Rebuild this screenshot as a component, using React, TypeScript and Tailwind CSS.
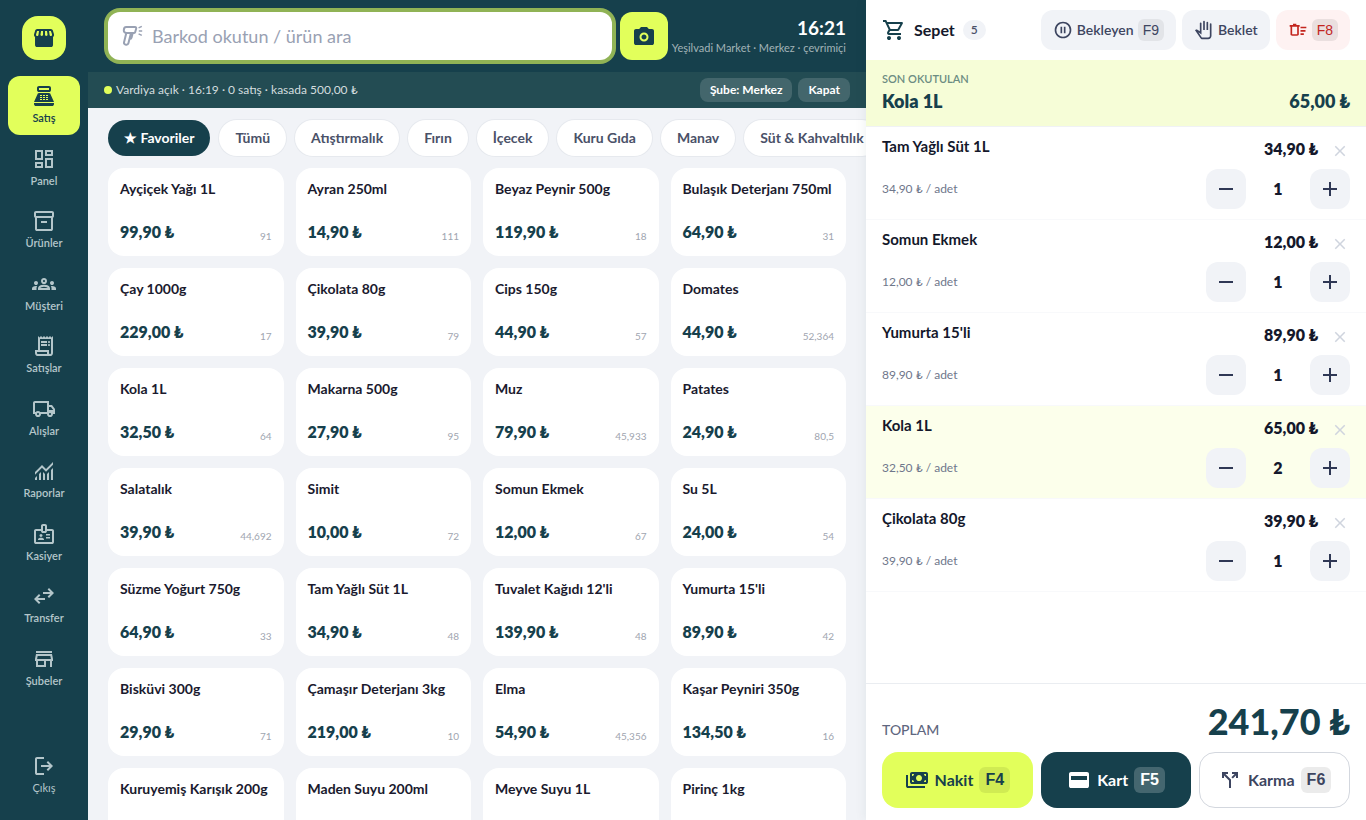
import { useState } from "react"

const icons = {
  storefront:
    "M841-518v318q0 33-23.5 56.5T761-120H201q-33 0-56.5-23.5T121-200v-318q-23-21-35.5-54t-.5-72l42-136q8-26 28.5-43t47.5-17h556q27 0 47 16.5t29 43.5l42 136q12 39-.5 71T841-518Zm-272-42q27 0 41-18.5t11-41.5l-22-140h-78v148q0 21 14 36.5t34 15.5Zm-180 0q23 0 37.5-15.5T441-612v-148h-78l-22 140q-4 24 10.5 42t37.5 18Zm-178 0q18 0 31.5-13t16.5-33l22-154h-78l-40 134q-6 20 6.5 43t41.5 23Zm540 0q29 0 42-23t6-43l-42-134h-76l22 154q3 20 16.5 33t31.5 13Z",
  register:
    "M280-640q-33 0-56.5-23.5T200-720v-80q0-33 23.5-56.5T280-880h400q33 0 56.5 23.5T760-800v80q0 33-23.5 56.5T680-640H280Zm0-80h400v-80H280v80ZM160-80q-33 0-56.5-23.5T80-160v-40h800v40q0 33-23.5 56.5T800-80H160ZM80-240l139-313q10-22 30-34.5t43-12.5h376q23 0 43 12.5t30 34.5l139 313H80Zm240-80h80v-40h-80v40Zm0-80h80v-40h-80v40Zm0-80h80v-40h-80v40Zm120 160h80v-40h-80v40Zm0-80h80v-40h-80v40Zm0-80h80v-40h-80v40Zm120 160h80v-40h-80v40Zm0-80h80v-40h-80v40Zm0-80h80v-40h-80v40Z",
  dashboard:
    "M520-600v-240h320v240H520ZM120-440v-400h320v400H120Zm400 320v-400h320v400H520Zm-400 0v-240h320v240H120Zm80-400h160v-240H200v240Zm400 320h160v-240H600v240Zm0-480h160v-80H600v80ZM200-200h160v-80H200v80Z",
  box: "M200-80q-33 0-56.5-23.5T120-160v-451q-18-11-29-28.5T80-680v-120q0-33 23.5-56.5T160-880h640q33 0 56.5 23.5T880-800v120q0 23-11 40.5T840-611v451q0 33-23.5 56.5T760-80H200Zm0-520v440h560v-440H200Zm-40-80h640v-120H160v120Zm200 280h240v-80H360v80Z",
  groups:
    "M0-240v-63q0-43 44-70t116-27q13 0 25 .5t23 2.5q-14 21-21 44t-7 48v65H0Zm240 0v-65q0-32 17.5-58.5T307-410q32-20 76.5-30t96.5-10q53 0 97.5 10t76.5 30q32 20 49 46.5t17 58.5v65H240Zm540 0v-65q0-26-6.5-49T754-397q11-2 22.5-2.5t23.5-.5q72 0 116 26.5t44 70.5v63H780Zm-455-80h311q-10-20-55.5-35T480-370q-55 0-100.5 15T325-320ZM160-440q-33 0-56.5-23.5T80-520q0-34 23.5-57t56.5-23q34 0 57 23t23 57q0 33-23 56.5T160-440Zm640 0q-33 0-56.5-23.5T720-520q0-34 23.5-57t56.5-23q34 0 57 23t23 57q0 33-23 56.5T800-440Zm-320-40q-50 0-85-35t-35-85q0-51 35-85.5t85-34.5q51 0 85.5 34.5T600-600q0 50-34.5 85T480-480Zm0-80q17 0 28.5-11.5T520-600q0-17-11.5-28.5T480-640q-17 0-28.5 11.5T440-600q0 17 11.5 28.5T480-560Z",
  receipt:
    "M240-80q-50 0-85-35t-35-85v-120h120v-560l60 60 60-60 60 60 60-60 60 60 60-60 60 60 60-60 60 60 60-60v680q0 50-35 85t-85 35H240Zm480-80q17 0 28.5-11.5T760-200v-560H320v440h360v120q0 17 11.5 28.5T720-160ZM360-600v-80h240v80H360Zm0 120v-80h240v80H360Zm320-120q-17 0-28.5-11.5T640-640q0-17 11.5-28.5T680-680q17 0 28.5 11.5T720-640q0 17-11.5 28.5T680-600Zm0 120q-17 0-28.5-11.5T640-520q0-17 11.5-28.5T680-560q17 0 28.5 11.5T720-520q0 17-11.5 28.5T680-480ZM240-160h360v-80H200v40q0 17 11.5 28.5T240-160Z",
  truck:
    "M240-160q-50 0-85-35t-35-85H40v-440q0-33 23.5-56.5T120-800h560v160h120l120 160v200h-80q0 50-35 85t-85 35q-50 0-85-35t-35-85H360q0 50-35 85t-85 35Zm0-80q17 0 28.5-11.5T280-280q0-17-11.5-28.5T240-320q-17 0-28.5 11.5T200-280q0 17 11.5 28.5T240-240ZM120-360h32q17-18 39-29t49-11q27 0 49 11t39 29h272v-360H120v360Zm600 120q17 0 28.5-11.5T760-280q0-17-11.5-28.5T720-320q-17 0-28.5 11.5T680-280q0 17 11.5 28.5T720-240Zm-40-200h170l-90-120h-80v120Z",
  chart:
    "M120-120v-80l80-80v160h-80Zm160 0v-240l80-80v320h-80Zm160 0v-320l80 81v239h-80Zm160 0v-239l80-80v319h-80Zm160 0v-400l80-80v480h-80ZM120-327v-113l280-280 160 160 280-280v113L560-447 400-607 120-327Z",
  badge:
    "M160-80q-33 0-56.5-23.5T80-160v-440q0-33 23.5-56.5T160-680h200v-120q0-33 23.5-56.5T440-880h80q33 0 56.5 23.5T600-800v120h200q33 0 56.5 23.5T880-600v440q0 33-23.5 56.5T800-80H160Zm0-80h640v-440H600q0 33-23.5 56.5T520-520h-80q-33 0-56.5-23.5T360-600H160v440Zm80-80h240v-18q0-17-9.5-31.5T444-312q-20-9-40.5-13.5T360-330q-23 0-43.5 4.5T276-312q-17 8-26.5 22.5T240-258v18Zm320-60h160v-60H560v60Zm-200-60q25 0 42.5-17.5T420-420q0-25-17.5-42.5T360-480q-25 0-42.5 17.5T300-420q0 25 17.5 42.5T360-360Zm200-60h160v-60H560v60ZM440-600h80v-200h-80v200Z",
  swap: "M280-160 80-360l200-200 56 57-103 103h287v80H233l103 103-56 57Zm400-240-56-57 103-103H440v-80h287L624-743l56-57 200 200-200 200Z",
  store:
    "M160-720v-80h640v80H160Zm0 560v-240h-40v-80l40-200h640l40 200v80h-40v240h-80v-240H560v240H160Zm80-80h240v-160H240v160Zm-38-240h556l-24-120H226l-24 120Z",
  logout:
    "M200-120q-33 0-56.5-23.5T120-200v-560q0-33 23.5-56.5T200-840h280v80H200v560h280v80H200Zm440-160-55-58 102-102H360v-80h327L585-622l55-58 200 200-200 200Z",
  camera:
    "M480-260q75 0 127.5-52.5T660-440q0-75-52.5-127.5T480-620q-75 0-127.5 52.5T300-440q0 75 52.5 127.5T480-260Zm0-80q-42 0-71-29t-29-71q0-42 29-71t71-29q42 0 71 29t29 71q0 42-29 71t-71 29ZM160-120q-33 0-56.5-23.5T80-200v-480q0-33 23.5-56.5T160-760h126l74-80h240l74 80h126q33 0 56.5 23.5T880-680v480q0 33-23.5 56.5T800-120H160Z",
  cart: "M280-80q-33 0-56.5-23.5T200-160q0-33 23.5-56.5T280-240q33 0 56.5 23.5T360-160q0 33-23.5 56.5T280-80Zm400 0q-33 0-56.5-23.5T600-160q0-33 23.5-56.5T680-240q33 0 56.5 23.5T760-160q0 33-23.5 56.5T680-80ZM246-720l96 200h280l110-200H246Zm-38-80h590q23 0 35 20.5t1 41.5L692-482q-11 20-29.5 31T622-440H324l-44 80h480v80H280q-45 0-68-39.5t-2-78.5l54-98-144-304H40v-80h130l38 80Z",
  pause:
    "M360-320h80v-320h-80v320Zm160 0h80v-320h-80v320ZM480-80q-83 0-156-31.5T197-197q-54-54-85.5-127T80-480q0-83 31.5-156T197-763q54-54 127-85.5T480-880q83 0 156 31.5T763-763q54 54 85.5 127T880-480q0 83-31.5 156T763-197q-54 54-127 85.5T480-80Zm0-80q134 0 227-93t93-227q0-134-93-227t-227-93q-134 0-227 93t-93 227q0 134 93 227t227 93Z",
  hand: "M402-40q-30 0-56-13.5T303-92L48-465l24-23q19-19 45-22t47 12l116 81v-383q0-17 11.5-28.5T320-840q17 0 28.5 11.5T360-800v537L212-367l157 229q5 8 14 13t19 5h278q33 0 56.5-23.5T760-200v-560q0-17 11.5-28.5T800-800q17 0 28.5 11.5T840-760v560q0 66-47 113T680-40H402Zm38-440v-400q0-17 11.5-28.5T480-920q17 0 28.5 11.5T520-880v400h-80Zm160 0v-360q0-17 11.5-28.5T640-880q17 0 28.5 11.5T680-840v360h-80Z",
  sweep:
    "M600-240v-80h160v80H600Zm0-320v-80h280v80H600Zm0 160v-80h240v80H600ZM120-640H80v-80h160v-60h160v60h160v80h-40v360q0 33-23.5 56.5T440-200H200q-33 0-56.5-23.5T120-280v-360Zm80 0v360h240v-360H200Z",
  cash: "M280-320q-33 0-56.5-23.5T200-400v-320q0-33 23.5-56.5T280-800h560q33 0 56.5 23.5T920-720v320q0 33-23.5 56.5T840-320H280ZM560-440q50 0 85-35t35-85q0-50-35-85t-85-35q-50 0-85 35t-35 85q0 50 35 85t85 35ZM280-400h80q0-33-23.5-56.5T280-480v80Zm560 0v-80q-33 0-56.5 23.5T760-400h80ZM280-640q33 0 56.5-23.5T360-720h-80v80Zm560 0v-80h-80q0 33 23.5 56.5T840-640ZM800-160H120q-33 0-56.5-23.5T40-240v-440h80v440h680v80Z",
  card: "M160-160q-33 0-56.5-23.5T80-240v-480q0-33 23.5-56.5T160-800h640q33 0 56.5 23.5T880-720v480q0 33-23.5 56.5T800-160H160Zm0-320h640v-160H160v160Z",
  split:
    "M440-160v-304L240-664v104h-80v-240h240v80H296l224 224v336h-80Zm154-376-58-58 128-126H560v-80h240v240h-80v-104L594-536Z",
  minus: "M200-440v-80h560v80H200Z",
  plus: "M440-440H200v-80h240v-240h80v240h240v80H520v240h-80v-240Z",
  close:
    "m256-200-56-56 224-224-224-224 56-56 224 224 224-224 56 56-224 224 224 224-56 56-224-224-224 224Z",
}

type IconName = keyof typeof icons

const Icon = ({ name, className }: { name: IconName; className: string }) => (
  <svg viewBox="0 -960 960 960" fill="currentColor" fillRule="evenodd" className={`shrink-0 ${className}`} aria-hidden="true">
    <path d={icons[name]} />
  </svg>
)

const ScannerIcon = () => (
  <svg
    viewBox="0 0 24 24"
    fill="none"
    stroke="currentColor"
    strokeWidth="2"
    strokeLinejoin="round"
    className="size-6 shrink-0"
    aria-hidden="true"
  >
    <path d="M6.3 3H15a1.2 1.2 0 0 1 1.2 1.5l-1 3.6a1.2 1.2 0 0 1-1.2.9H6.5A2.6 2.6 0 0 1 3.8 6.4C3.8 4.5 4.9 3 6.3 3Z" />
    <path d="M6.3 9 4 18.4a1.9 1.9 0 0 0 1.8 2.3h.8a1.9 1.9 0 0 0 1.8-1.4L11 9M9.5 15h.3a1.8 1.8 0 0 0 1.7-1.3L12.7 9" />
    <path d="m18.6 3.9 3.2-1.500M18.8 7h3.400M18.600 9.900l3.200 1.500" strokeWidth="1.5" />
  </svg>
)

const navItems: { label: string; icon: IconName }[] = [
  { label: "Satış", icon: "register" },
  { label: "Panel", icon: "dashboard" },
  { label: "Ürünler", icon: "box" },
  { label: "Müşteri", icon: "groups" },
  { label: "Satışlar", icon: "receipt" },
  { label: "Alışlar", icon: "truck" },
  { label: "Raporlar", icon: "chart" },
  { label: "Kasiyer", icon: "badge" },
  { label: "Transfer", icon: "swap" },
  { label: "Şubeler", icon: "store" },
]

const categories = ["★ Favoriler", "Tümü", "Atıştırmalık", "Fırın", "İçecek", "Kuru Gıda", "Manav", "Süt & Kahvaltılık"]

const products: { name: string; price?: number; stock?: string }[] = [
  { name: "Ayçiçek Yağı 1L", price: 99.9, stock: "91" },
  { name: "Ayran 250ml", price: 14.9, stock: "111" },
  { name: "Beyaz Peynir 500g", price: 119.9, stock: "18" },
  { name: "Bulaşık Deterjanı 750ml", price: 64.9, stock: "31" },
  { name: "Çay 1000g", price: 229, stock: "17" },
  { name: "Çikolata 80g", price: 39.9, stock: "79" },
  { name: "Cips 150g", price: 44.9, stock: "57" },
  { name: "Domates", price: 44.9, stock: "52,364" },
  { name: "Kola 1L", price: 32.5, stock: "64" },
  { name: "Makarna 500g", price: 27.9, stock: "95" },
  { name: "Muz", price: 79.9, stock: "45,933" },
  { name: "Patates", price: 24.9, stock: "80,5" },
  { name: "Salatalık", price: 39.9, stock: "44,692" },
  { name: "Simit", price: 10, stock: "72" },
  { name: "Somun Ekmek", price: 12, stock: "67" },
  { name: "Su 5L", price: 24, stock: "54" },
  { name: "Süzme Yoğurt 750g", price: 64.9, stock: "33" },
  { name: "Tam Yağlı Süt 1L", price: 34.9, stock: "48" },
  { name: "Tuvalet Kağıdı 12'li", price: 139.9, stock: "48" },
  { name: "Yumurta 15'li", price: 89.9, stock: "42" },
  { name: "Bisküvi 300g", price: 29.9, stock: "71" },
  { name: "Çamaşır Deterjanı 3kg", price: 219, stock: "10" },
  { name: "Elma", price: 54.9, stock: "45,356" },
  { name: "Kaşar Peyniri 350g", price: 134.5, stock: "16" },
  { name: "Kuruyemiş Karışık 200g" },
  { name: "Maden Suyu 200ml" },
  { name: "Meyve Suyu 1L" },
  { name: "Pirinç 1kg" },
]

const initialCart = [
  { name: "Tam Yağlı Süt 1L", price: 34.9, qty: 1 },
  { name: "Somun Ekmek", price: 12, qty: 1 },
  { name: "Yumurta 15'li", price: 89.9, qty: 1 },
  { name: "Kola 1L", price: 32.5, qty: 2 },
  { name: "Çikolata 80g", price: 39.9, qty: 1 },
]

const money = (value: number) => `${value.toFixed(2).replace(".", ",")} ₺`

const Sidebar = () => (
  <aside className="flex w-22 shrink-0 flex-col items-center bg-[#16404c] px-2 py-4 text-[#b4c6ca]">
    <div className="mb-4 flex size-11 shrink-0 items-center justify-center rounded-2xl bg-[#e2ff5b] text-[#16404c]">
      <Icon name="storefront" className="size-6" />
    </div>
    <nav className="flex w-full flex-col gap-1">
      {navItems.map((item, i) => (
        <a
          key={item.label}
          href="#"
          className={`flex flex-col items-center gap-0.5 rounded-xl py-2 text-[11px] leading-normal font-semibold ${
            i === 0 ? "bg-[#e2ff5b] text-[#16404c]" : ""
          }`}
        >
          <Icon name={item.icon} className="size-6" />
          {item.label}
        </a>
      ))}
    </nav>
    <button className="mt-auto flex w-full flex-col items-center gap-0.5 pt-2 pb-2 text-[11px] leading-normal">
      <Icon name="logout" className="size-6" />
      Çıkış
    </button>
  </aside>
)

const Header = () => (
  <header className="flex h-18 shrink-0 items-center gap-2 bg-[#16404c] px-5">
    <label className="flex h-12 min-w-0 flex-1 items-center gap-2 rounded-xl bg-white px-3 text-[#99a1b3] ring-4 ring-[#e2ff5b]/60">
      <ScannerIcon />
      <input
        type="text"
        aria-label="Barkod"
        placeholder="Barkod okutun / ürün ara"
        className="min-w-0 flex-1 bg-transparent text-lg text-[#1a1a2e] outline-none placeholder:text-[#99a1b3]"
      />
    </label>
    <button
      aria-label="Kamera"
      className="flex size-12 shrink-0 items-center justify-center rounded-xl bg-[#e2ff5b] text-[#16404c]"
    >
      <Icon name="camera" className="size-6" />
    </button>
    <div className="flex w-[170px] shrink-0 flex-col items-end whitespace-nowrap">
      <div className="text-[19px] leading-6 font-bold text-white">16:21</div>
      <div className="text-[11px] leading-4 text-[#a2b3b7]">Yeşilvadi Market · Merkez · çevrimiçi</div>
    </div>
  </header>
)

const ShiftBar = () => (
  <div className="flex h-9 shrink-0 items-center gap-1.5 bg-[#234c53] px-4 text-white">
    <span className="flex items-center gap-1 text-xs text-[#d3dddf]">
      <span className="size-2 rounded-full bg-[#e2ff5b]" />
      Vardiya açık · 16:19 · 0 satış · kasada 500,00 ₺
    </span>
    <button className="ml-auto h-6 rounded-lg bg-white/15 px-2.5 text-xs font-bold">Şube: Merkez</button>
    <button className="h-6 rounded-lg bg-white/15 px-2.5 text-xs font-bold">Kapat</button>
  </div>
)

const CartPanel = () => {
  const [cart, setCart] = useState(initialCart)

  const changeQty = (name: string, diff: number) =>
    setCart(cart.map((c) => (c.name === name ? { ...c, qty: Math.max(1, c.qty + diff) } : c)))

  const total = cart.reduce((sum, c) => sum + c.price * c.qty, 0)

  return (
    <section className="z-10 flex w-125 shrink-0 flex-col bg-white shadow-[-2px_0_10px_rgba(22,64,76,0.06)]">
      <div className="flex h-15 shrink-0 items-center px-4">
        <Icon name="cart" className="size-6 text-[#16404c]" />
        <h2 className="ml-2 text-base font-bold text-[#14182b]">Sepet</h2>
        <span className="ml-2 rounded-full bg-[#f1f3f7] px-2 text-xs leading-5 font-semibold text-[#4a5168]">{cart.length}</span>
        <div className="ml-auto flex gap-1.5 text-sm font-semibold text-[#3d4560]">
          <button className="flex h-10 items-center gap-1 rounded-xl bg-[#f1f3f7] px-3">
            <Icon name="pause" className="size-5" />
            Bekleyen
            <kbd className="rounded-md bg-black/6 px-[5px] font-[Liberation_Sans,sans-serif] text-sm leading-[22px] font-normal">F9</kbd>
          </button>
          <button className="flex h-10 items-center gap-1 rounded-xl bg-[#f1f3f7] px-3">
            <Icon name="hand" className="size-5" />
            Beklet
          </button>
          <button aria-label="Sepeti temizle" className="flex h-10 items-center gap-1 rounded-xl bg-[#fef2f2] px-3 text-[#c3261f]">
            <Icon name="sweep" className="size-5" />
            <kbd className="rounded-md bg-black/8 px-[5px] font-[Liberation_Sans,sans-serif] text-sm leading-[22px] font-normal">F8</kbd>
          </button>
        </div>
      </div>

      <div className="shrink-0 border-b border-[#f0f2f5] bg-[#f6fdd7] px-4 py-[11px] text-[#16404c]">
        <div className="text-[11px] leading-4 font-semibold text-[#6c8c82]">SON OKUTULAN</div>
        <div className="flex justify-between text-lg leading-7 font-extrabold">
          <span>Kola 1L</span>
          <span>{money(65)}</span>
        </div>
      </div>

      <ul className="min-h-0 flex-1 overflow-hidden">
        {cart.map((c) => (
          <li
            key={c.name}
            className={`border-b border-[#f8f9fb] px-4 py-2.5 ${c.name === "Kola 1L" ? "bg-[#fcffeb]" : ""}`}
          >
            <div className="flex h-7 items-start">
              <span className="text-[15px] leading-[18px] font-bold text-[#14182b]">{c.name}</span>
              <span className="ml-auto text-base leading-6 font-extrabold text-[#14182b]">{money(c.price * c.qty)}</span>
              <button
                aria-label={`${c.name} sil`}
                onClick={() => setCart(cart.filter((x) => x.name !== c.name))}
                className="ml-3 flex h-7 w-5 items-center justify-center text-[#cfd4de]"
              >
                <Icon name="close" className="size-4.5" />
              </button>
            </div>
            <div className="mt-1 flex h-10 items-center">
              <span className="text-xs text-[#6f778b]">{money(c.price)} / adet</span>
              <button
                aria-label="Azalt"
                onClick={() => changeQty(c.name, -1)}
                className="ml-auto flex size-10 items-center justify-center rounded-xl bg-[#f1f3f7] text-[#2f3855]"
              >
                <Icon name="minus" className="size-6" />
              </button>
              <span className="w-16 text-center text-base font-extrabold text-[#14182b]">{c.qty}</span>
              <button
                aria-label="Arttır"
                onClick={() => changeQty(c.name, 1)}
                className="flex size-10 items-center justify-center rounded-xl bg-[#f1f3f7] text-[#2f3855]"
              >
                <Icon name="plus" className="size-6" />
              </button>
            </div>
          </li>
        ))}
      </ul>

      <div className="shrink-0 border-t border-[#eaedf1] px-4 py-3">
        <div className="flex h-14 items-start justify-between">
          <span className="mt-6 text-sm leading-5 font-medium text-[#5f6780]">TOPLAM</span>
          <span className="text-4xl leading-[50px] font-black text-[#16404c]">{money(total)}</span>
        </div>
        <div className="grid grid-cols-3 gap-2 text-base font-bold">
          <button className="flex h-14 items-center justify-center gap-1.5 rounded-2xl bg-[#e2ff5b] text-[#16404c]">
            <Icon name="cash" className="size-6" />
            Nakit
            <kbd className="rounded-md bg-black/8 px-1.5 font-[Liberation_Sans,sans-serif] text-base leading-6.5">F4</kbd>
          </button>
          <button className="flex h-14 items-center justify-center gap-1.5 rounded-2xl bg-[#16404c] text-white">
            <Icon name="card" className="size-6" />
            Kart
            <kbd className="rounded-md bg-white/20 px-1.5 font-[Liberation_Sans,sans-serif] text-base leading-6.5">F5</kbd>
          </button>
          <button className="flex h-14 items-center justify-center gap-1.5 rounded-2xl border border-[#d3d7de] text-[#3d4560]">
            <Icon name="split" className="size-6" />
            Karma
            <kbd className="rounded-md bg-black/8 px-1.5 font-[Liberation_Sans,sans-serif] text-base leading-6.5">F6</kbd>
          </button>
        </div>
      </div>
    </section>
  )
}

export default function App() {
  const [category, setCategory] = useState(categories[0])

  return (
    <div className="flex h-screen overflow-hidden bg-[#f1f3f7] font-[Lato,sans-serif]">
      <Sidebar />
      <main className="flex min-w-0 flex-1 flex-col">
        <Header />
        <ShiftBar />
        <div className="flex shrink-0 gap-[9px] overflow-hidden px-5 py-3">
          {categories.map((c) => (
            <button
              key={c}
              onClick={() => setCategory(c)}
              className={`h-9 shrink-0 rounded-full px-4 text-sm font-bold whitespace-nowrap ring-1 ${
                c === category ? "bg-[#16404c] text-white ring-transparent" : "bg-white text-[#4a5168] ring-[#e6e9ee]"
              }`}
            >
              {c}
            </button>
          ))}
        </div>
        <div className="grid min-h-0 flex-1 auto-rows-[88px] grid-cols-4 gap-3 overflow-hidden px-5">
          {products.map((p) => (
            <button key={p.name} className="flex flex-col justify-between rounded-2xl bg-white p-3 text-left">
              <span className="text-sm leading-[18px] font-bold whitespace-nowrap text-[#1a1a2e]">{p.name}</span>
              {p.price !== undefined && (
                <span className="flex w-full items-end justify-between">
                  <span className="text-base leading-6 font-extrabold text-[#16404c]">{money(p.price)}</span>
                  <span className="text-[10px] leading-4 text-[#a0a5b0]">{p.stock}</span>
                </span>
              )}
            </button>
          ))}
        </div>
      </main>
      <CartPanel />
    </div>
  )
}
